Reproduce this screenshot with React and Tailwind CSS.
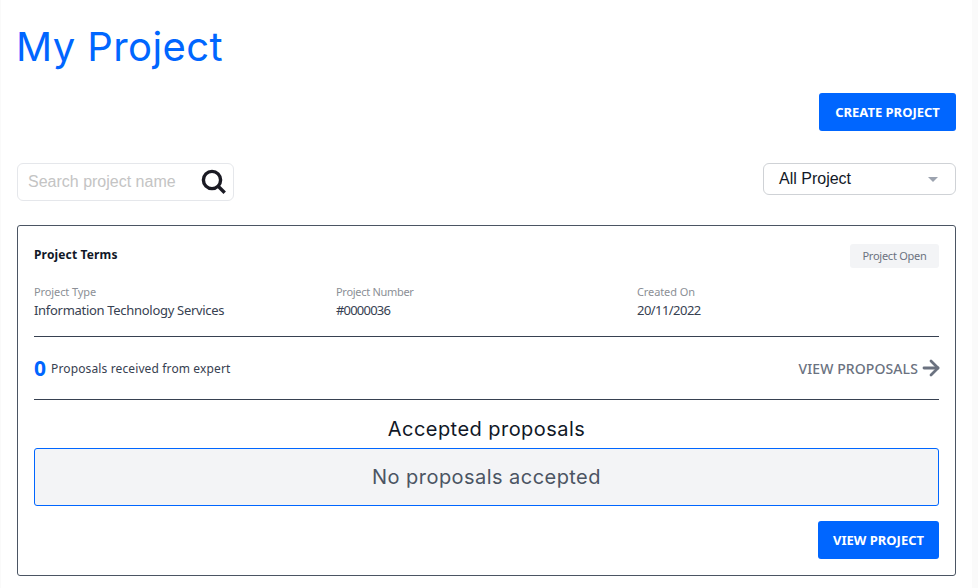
import { ArrowRight } from 'lucide-react';

const BODY = "font-['Noto_Sans',sans-serif]";
const HEAD = "font-['Inter',sans-serif]";

function Field({ label, value, className, labelClass = 'tracking-[-0.1px]', valueClass = 'tracking-[-0.3px]' }) {
    return (
        <div className={className}>
            <p className={`text-[11px] leading-[15px] text-[#8b8f96] ${labelClass}`}>{label}</p>
            <p className={`mt-[2px] text-[13px] leading-[18px] text-[#374151] ${valueClass}`}>{value}</p>
        </div>
    );
}

export default function App() {
    return (
        <div className="flex h-[588px] w-[978px] overflow-hidden border-l border-[#fafafa] bg-white">
            <div className={`w-[971px] pl-[16px] pr-[16px] ${BODY}`}>
                <h1 className={`-ml-[1px] pt-[23px] text-[40px] leading-[48px] tracking-[0.4px] text-[#0066ff] ${HEAD}`}>My Project</h1>

                <div className="mt-[22px] flex justify-end">
                    <button className="h-[38px] w-[137px] rounded-[3px] bg-[#0066ff] pt-[1px] text-[13px] font-bold text-white">
                        CREATE PROJECT
                    </button>
                </div>

                {/* Search + filter */}
                <div className="mt-[32px] flex items-start justify-between">
                    <div className="flex h-[38px] w-[217px] items-center justify-between rounded-[6px] border border-[#e5e7eb] pl-[10px] pr-[6px]">
                        <span className="font-['Liberation_Sans',sans-serif] text-[16px] text-[#c4c4c4]">Search project name</span>
                        <svg width="26" height="26" viewBox="0 0 26 26" fill="none" stroke="#1a1a23" strokeWidth="3.4">
                            <circle cx="11" cy="11" r="8.6" />
                            <path d="M17.2 17.2l6.5 6.5" />
                        </svg>
                    </div>
                    <div className="flex h-[32px] w-[193px] items-center justify-between rounded-[6px] border border-[#cfd2d6] pl-[15px] pr-[17px]">
                        <span className="font-['Liberation_Sans',sans-serif] text-[16px] text-[#111827]">All Project</span>
                        <span className="h-0 w-0 border-x-[5px] border-t-[5px] border-x-transparent border-t-[#9ca3af]" />
                    </div>
                </div>

                {/* Project card */}
                <div className="mt-[24px] h-[351px] rounded-[3px] border border-[#4b5563] px-[16px] pt-[18px]">
                    <div className="flex items-start justify-between">
                        <p className="pt-[1px] text-[12px] font-bold leading-[20px] tracking-[0.15px] text-[#111827]">Project Terms</p>
                        <span className="flex h-[24px] w-[89px] items-center justify-center rounded-[3px] bg-[#f3f4f6] text-[11px] tracking-[-0.25px] text-[#6b7280]">
                            Project Open
                        </span>
                    </div>
                    <div className="mt-[16px] flex border-b border-[#374151] pb-[17px]">
                        <Field label="Project Type" value="Information Technology Services" className="w-[302px]" />
                        <Field label="Project Number" labelClass="tracking-[-0.3px]" value="#0000036" valueClass="tracking-[-0.8px]" className="w-[301px]" />
                        <Field label="Created On" value="20/11/2022" valueClass="tracking-[-0.55px]" />
                    </div>
                    <div className="flex h-[63px] items-center justify-between border-b border-[#374151]">
                        <div className="flex items-center gap-[5px]">
                            <span className="text-[21px] font-bold leading-none text-[#0066ff]">0</span>
                            <span className="pt-[1px] text-[12px] tracking-[0.13px] text-[#374151]">Proposals received from expert</span>
                        </div>
                        <div className="flex items-center text-[14px] font-medium tracking-[0.1px] text-[#6b7280]">
                            VIEW PROPOSALS
                            <ArrowRight size={24} strokeWidth={2.8} className="-mr-[4px] ml-[1px] text-[#6b7280]" />
                        </div>
                    </div>
                    <h2 className={`mt-[16px] text-center text-[20px] leading-[26px] tracking-[0.45px] text-[#111827] ${HEAD}`}>Accepted proposals</h2>
                    <div className={`mt-[6px] flex h-[58px] items-center justify-center rounded-[3px] border border-[#0066ff] bg-[#f3f4f6] text-[20px] tracking-[0.45px] text-[#4b5563] ${HEAD}`}>
                        No proposals accepted
                    </div>
                    <div className="mt-[15px] flex justify-end">
                        <button className="h-[38px] w-[121px] rounded-[3px] bg-[#0066ff] pt-[1px] text-[13px] font-bold text-white">
                            VIEW PROJECT
                        </button>
                    </div>
                </div>
            </div>
            <div className="flex-1 bg-[#fafafa]" />
        </div>
    );
}
